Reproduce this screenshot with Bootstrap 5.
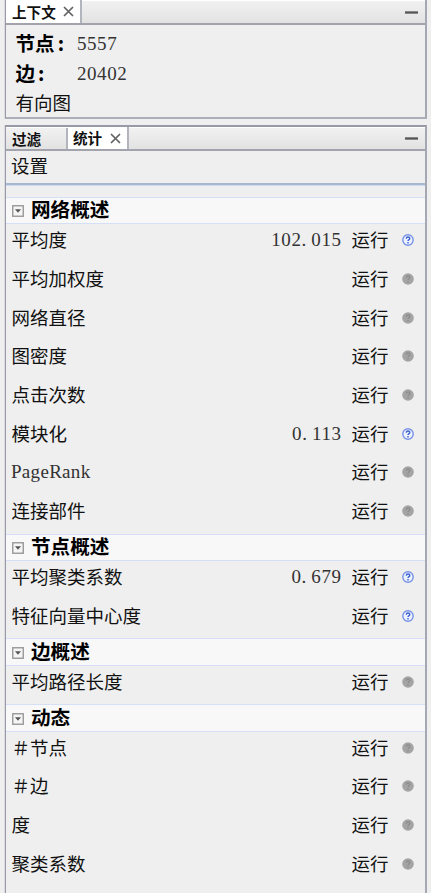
<!DOCTYPE html>
<html lang="zh-CN">
<head>
<meta charset="utf-8">
<meta name="viewport" content="width=device-width, initial-scale=1">
<title>统计</title>
<link href="https://cdn.jsdelivr.net/npm/bootstrap@5.3.0/dist/css/bootstrap.min.css" rel="stylesheet">
<style>
  html, body { height: 893px; overflow: hidden; }
  body { background: #efefef; color: #111; font: 18.5px/28px "Noto Sans CJK SC", sans-serif; padding: 0 4px 0 5px; }
  .pane { border: 1px solid #989ba7; border-right: 2px solid #a5a7b2; box-shadow: -1px 0 #dcdce0; }
  .pane-context { height: 119px; border-top: 0; border-bottom: 2px solid #acafb7; margin-bottom: 6px; }
  .pane-stats { height: 780px; border-top-width: 2px; }
  .tabstrip { height: 25px; background: linear-gradient(#f1f1f1, #e2e2e2); border-bottom: 2px solid #a2a3ac; border-top: 1px solid #fff; font-size: 14.6px; font-weight: 700; line-height: 22px; }
  .pane-stats .tabstrip { height: 24px; }
  .tab-item { border-right: 2px solid #b3b5bc; padding-left: 6px; }
  .tab-item.active { background: #fff; margin-top: -1px; }
  .tab-context { width: 76px; }
  .tab-filter { width: 62px; }
  .tab-statistics { width: 61px; padding-left: 5px; }
  .tab-item svg { margin-right: 6px; }
  .minimize { width: 13px; height: 3px; background: #555; border-top: 1px solid #888; border-bottom: 1px solid #888; margin-right: 7px; }
  .latin { font-family: "Liberation Serif", serif; font-size: 19px; letter-spacing: .55px; color: #333; }
  .latin i { font-style: normal; padding-right: 4.6px; }
  .latin.me-auto { letter-spacing: .3px; margin-left: -.5px; }
  .context-info { padding: 4px 0 0 9.5px; line-height: 29.5px; }
  .context-info dt { width: 61.5px; font-size: 19.6px; font-weight: 700; color: #000; margin-top: -1px; }
  .context-info dt span { margin-left: 3px; }
  .settings { height: 31.5px; padding: 0 0 0 5px; }
  .settings-rule { height: 3px; background: #a7b8cf; border-bottom: 1px solid #ccdaf2; margin-bottom: 11.5px; }
  .group-head { height: 27.3px; background: #f8f8f8; border-top: 1px solid #d5e0f6; border-bottom: 1.5px solid #d5e0f6; padding: 0 0 3px 6px; gap: 7px; font-size: 19.6px; font-weight: 700; color: #000; line-height: 22px; }
  .group-head svg { margin-top: 4px; }
  .metric { height: 38.7px; padding: 2px 11px 8.7px 5.5px; }
  .metric > span:not(.latin) { padding-bottom: 2px; }
  .run { width: 36.5px; margin-left: 10px; margin-right: 14px; white-space: nowrap; }
</style>
<script src="https://cdn.jsdelivr.net/npm/bootstrap@5.3.0/dist/js/bootstrap.bundle.min.js"></script>
</head>
<body>
<svg class="d-none" xmlns="http://www.w3.org/2000/svg">
  <symbol id="close" viewBox="0 0 11 11"><path d="M1 1l9 9M10 1L1 10" stroke="#626262" stroke-width="1.7"/></symbol>
  <symbol id="toggle" viewBox="0 0 12 12"><rect x=".75" y=".75" width="10.5" height="10.5" fill="#f5f5f5" stroke="#999" stroke-width="1.4"/><path d="M3 4.2h6L6 7.8z" fill="#555"/></symbol>
  <symbol id="help" viewBox="0 0 12 12"><circle cx="6" cy="6" r="5.2" fill="#edf2ff" stroke="#7892e6" stroke-width="1.4"/><path d="M4.3 4.7c0-2.4 3.5-2.2 3.5-.2C7.8 5.7 6 5.6 6 7.1M6 8.1v1.4" fill="none" stroke="#3f62cf" stroke-width="1.4"/></symbol>
  <symbol id="help-off" viewBox="0 0 12 12"><circle cx="6" cy="6" r="5.8" fill="#a4a4a4"/><path d="M4.3 4.7c0-2.4 3.5-2.2 3.5-.2C7.8 5.7 6 5.6 6 7.1M6 8.1v1.4" fill="none" stroke="#8a8a8a" stroke-width="1.2"/></symbol>
</svg>

<section class="pane pane-context">
  <div class="tabstrip d-flex align-items-stretch">
    <div class="tab-item tab-context active d-flex align-items-center justify-content-between">上下文<svg width="11" height="11"><use href="#close"/></svg></div>
    <span class="minimize ms-auto align-self-center"></span>
  </div>
  <dl class="context-info m-0">
    <div class="d-flex"><dt>节点<span>:</span></dt><dd class="latin m-0">5557</dd></div>
    <div class="d-flex"><dt>边<span>:</span></dt><dd class="latin m-0">20402</dd></div>
    <div>有向图</div>
  </dl>
</section>

<section class="pane pane-stats">
  <div class="tabstrip d-flex align-items-stretch">
    <div class="tab-item tab-filter d-flex align-items-center">过滤</div>
    <div class="tab-item tab-statistics active d-flex align-items-center justify-content-between">统计<svg width="11" height="11"><use href="#close"/></svg></div>
    <span class="minimize ms-auto align-self-center"></span>
  </div>
  <div class="settings">设置</div>
  <div class="settings-rule"></div>

  <div class="group-head d-flex align-items-center"><svg width="12" height="12"><use href="#toggle"/></svg>网络概述</div>
  <div class="metric d-flex align-items-center"><span>平均度</span><span class="latin ms-auto">102<i>.</i>015</span><span class="run">运行</span><svg width="12" height="12"><use href="#help"/></svg></div>
  <div class="metric d-flex align-items-center"><span class="me-auto">平均加权度</span><span class="run">运行</span><svg width="12" height="12"><use href="#help-off"/></svg></div>
  <div class="metric d-flex align-items-center"><span class="me-auto">网络直径</span><span class="run">运行</span><svg width="12" height="12"><use href="#help-off"/></svg></div>
  <div class="metric d-flex align-items-center"><span class="me-auto">图密度</span><span class="run">运行</span><svg width="12" height="12"><use href="#help-off"/></svg></div>
  <div class="metric d-flex align-items-center"><span class="me-auto">点击次数</span><span class="run">运行</span><svg width="12" height="12"><use href="#help-off"/></svg></div>
  <div class="metric d-flex align-items-center"><span>模块化</span><span class="latin ms-auto">0<i>.</i>113</span><span class="run">运行</span><svg width="12" height="12"><use href="#help"/></svg></div>
  <div class="metric d-flex align-items-center"><span class="latin me-auto">PageRank</span><span class="run">运行</span><svg width="12" height="12"><use href="#help-off"/></svg></div>
  <div class="metric d-flex align-items-center"><span class="me-auto">连接部件</span><span class="run">运行</span><svg width="12" height="12"><use href="#help-off"/></svg></div>

  <div class="group-head d-flex align-items-center"><svg width="12" height="12"><use href="#toggle"/></svg>节点概述</div>
  <div class="metric d-flex align-items-center"><span>平均聚类系数</span><span class="latin ms-auto">0<i>.</i>679</span><span class="run">运行</span><svg width="12" height="12"><use href="#help"/></svg></div>
  <div class="metric d-flex align-items-center"><span class="me-auto">特征向量中心度</span><span class="run">运行</span><svg width="12" height="12"><use href="#help"/></svg></div>

  <div class="group-head d-flex align-items-center"><svg width="12" height="12"><use href="#toggle"/></svg>边概述</div>
  <div class="metric d-flex align-items-center"><span class="me-auto">平均路径长度</span><span class="run">运行</span><svg width="12" height="12"><use href="#help-off"/></svg></div>

  <div class="group-head d-flex align-items-center"><svg width="12" height="12"><use href="#toggle"/></svg>动态</div>
  <div class="metric d-flex align-items-center"><span class="me-auto">＃节点</span><span class="run">运行</span><svg width="12" height="12"><use href="#help-off"/></svg></div>
  <div class="metric d-flex align-items-center"><span class="me-auto">＃边</span><span class="run">运行</span><svg width="12" height="12"><use href="#help-off"/></svg></div>
  <div class="metric d-flex align-items-center"><span class="me-auto">度</span><span class="run">运行</span><svg width="12" height="12"><use href="#help-off"/></svg></div>
  <div class="metric d-flex align-items-center"><span class="me-auto">聚类系数</span><span class="run">运行</span><svg width="12" height="12"><use href="#help-off"/></svg></div>
</section>
</body>
</html>
